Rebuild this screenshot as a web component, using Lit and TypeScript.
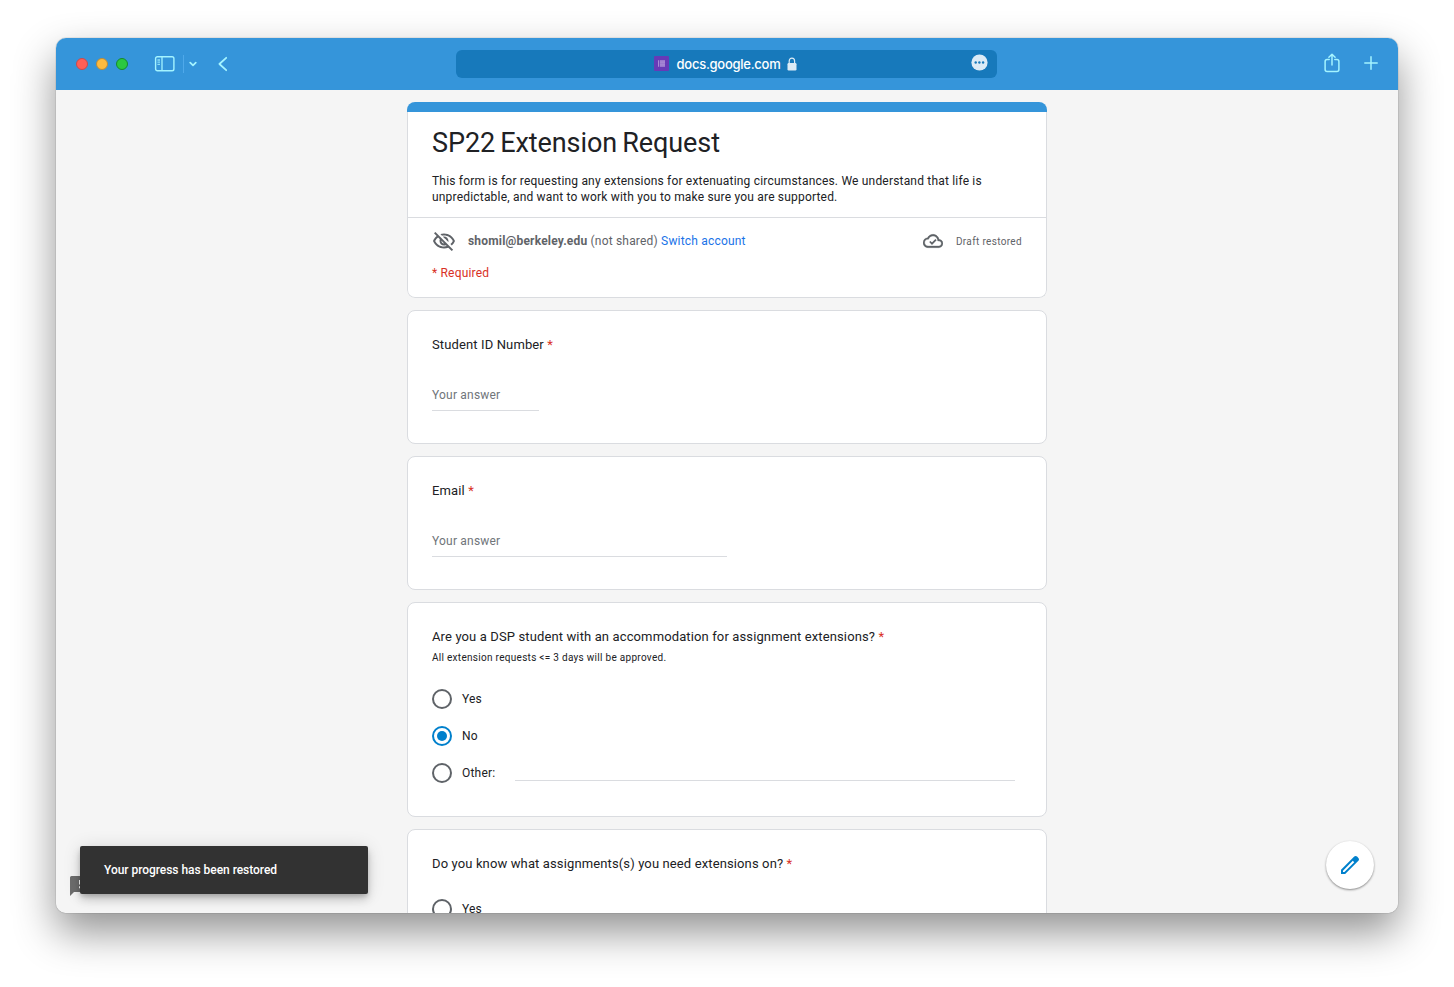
import { LitElement, html, css, nothing } from "lit";
import { customElement } from "lit/decorators.js";
import { classMap } from "lit/directives/class-map.js";

@customElement("browser-toolbar")
export class BrowserToolbar extends LitElement {
  static styles = css`
    :host {
      display: grid;
      grid-template-columns: 400px 541px 1fr;
      align-items: center;
      height: 52px;
      background: #3595da;
      font-family: Inter, Roboto, sans-serif;
    }
    svg { display: block; }
    .left { display: flex; align-items: center; padding-left: 20px; }
    .lights { display: flex; gap: 8px; margin-right: 26px; }
    .light { width: 12px; height: 12px; border-radius: 50%; box-sizing: border-box; border: 1px solid; }
    .red { background: #ff5f57; border-color: #c94a4c; }
    .yellow { background: #fdbb3f; border-color: #b98a3a; }
    .green { background: #2bc840; border-color: #16892d; }
    .sep { width: 1px; height: 18px; background: #4fa9ea; margin: 0 5px 0 8px; }
    .chev { margin-right: 20px; }
    .address {
      position: relative;
      display: flex;
      align-items: center;
      justify-content: center;
      box-sizing: border-box;
      height: 28px;
      padding-right: 2px;
      border-radius: 6px;
      background: #1779bb;
      color: #fff;
      font-size: 13px;
      font-weight: 500;
      letter-spacing: -0.27px;
    }
    .fav { margin: -1px 8px 0 0; }
    .lock { margin: -1px 0 0 7px; }
    .more { position: absolute; right: 9px; top: 4px; }
    .right { display: flex; justify-content: flex-end; align-items: center; gap: 24px; padding: 0 20px 2px 0; }
  `;
  render() {
    return html`
      <div class="left">
        <div class="lights">
          <div class="light red"></div><div class="light yellow"></div><div class="light green"></div>
        </div>
        <svg width="21" height="16" viewBox="0 0 21 16" fill="none" stroke="#a4f4ff">
          <rect x="1.6" y="0.7" width="18.3" height="14" rx="1.8" stroke-width="1.4" />
          <path d="M8 1v13.6" stroke-width="1.3" />
          <path d="M3.4 4H6M3.4 6.2H6M3.4 8.4H6" stroke-width="1.3" opacity=".8" />
        </svg>
        <div class="sep"></div>
        <svg class="chev" width="8" height="6" viewBox="0 0 8 6" fill="none" stroke="#a4f4ff" stroke-width="1.7" stroke-linecap="round" stroke-linejoin="round">
          <path d="M1.2 1.6 4 4.4l2.8-2.8" />
        </svg>
        <svg width="12" height="16" viewBox="0 0 12 16" fill="none" stroke="#a4f4ff" stroke-width="1.8" stroke-linecap="round" stroke-linejoin="round">
          <path d="M9.2 1.8 2.4 8l6.8 6.2" />
        </svg>
      </div>
      <div class="address">
        <svg class="fav" width="15" height="15" viewBox="0 0 15 15">
          <rect width="15" height="15" rx="1" fill="#673ab7" />
          <path d="M4 4.2h1.2v6.6H4zM6 4.2h5v6.6H6z" fill="#a98bd6" />
          <path d="M6 5.9h5M6 7.5h5M6 9.1h5" stroke="#8f68cb" stroke-width=".5" />
        </svg>
        <span>docs.google.com</span>
        <svg class="lock" width="10" height="14" viewBox="0 0 10 14">
          <path d="M2.2 7V4a2.7 2.9 0 0 1 5.4 0v3" fill="none" stroke="#dcebf6" stroke-width="1.2" />
          <rect x=".5" y="6.1" width="9" height="7.4" rx="1.2" fill="#dcebf6" />
        </svg>
        <svg class="more" width="17" height="17" viewBox="0 0 17 17">
          <circle cx="8.5" cy="8.5" r="8.1" fill="#dcebf6" />
          <circle cx="4.7" cy="8.5" r="1.2" fill="#1779bb" /><circle cx="8.4" cy="8.5" r="1.2" fill="#1779bb" /><circle cx="12.1" cy="8.5" r="1.2" fill="#1779bb" />
        </svg>
      </div>
      <div class="right">
        <svg width="16" height="20" viewBox="0 0 16 20" fill="none" stroke="#a4f4ff" stroke-width="1.5" stroke-linecap="round" stroke-linejoin="round">
          <path d="M5.2 6.5H3.1a2 2 0 0 0-2 2v7.9a2 2 0 0 0 2 2h9.8a2 2 0 0 0 2-2V8.5a2 2 0 0 0-2-2h-2.1M8 12V1.2M4.9 4.2 8 1.2l3.1 3" />
        </svg>
        <svg width="14" height="14" viewBox="0 0 14 14" fill="none" stroke="#a4f4ff" stroke-width="1.5" stroke-linecap="round">
          <path d="M7 .8v12.4M.8 7h12.4" />
        </svg>
      </div>
    `;
  }
}

interface Choice { label: string; selected?: boolean; free?: boolean; }

@customElement("question-card")
export class QuestionCard extends LitElement {
  static properties = { heading: {}, hint: {}, field: {}, choices: { attribute: false } };
  declare heading: string;
  declare hint?: string;
  declare field?: string;
  declare choices?: Choice[];

  static styles = css`
    :host {
      display: block;
      box-sizing: border-box;
      padding: 24px 31px 32px 24px;
      border: 1px solid #dadce0;
      border-radius: 8px;
      background: #fff;
      color: #202124;
      font: 400 12px/16px Roboto, sans-serif;
      letter-spacing: 0.2px;
    }
    .heading { height: 20px; font-size: 13px; line-height: 20px; letter-spacing: 0.125px; }
    .star { color: #d93025; }
    .hint { font-size: 10px; line-height: 14px; letter-spacing: 0.29px; margin-top: 4px; }
    .field { box-sizing: border-box; height: 24px; margin-top: 32px; border-bottom: 1px solid #dadce0; color: #70757a; }
    .short { width: 107px; }
    .medium { width: 295px; }
    .choices { display: flex; flex-direction: column; gap: 17px; margin-top: 25px; }
    .with-hint { margin-top: 24px; }
    .choice { display: flex; align-items: center; height: 20px; }
    .radio {
      display: grid; place-items: center;
      box-sizing: border-box; width: 20px; height: 20px; margin-right: 10px;
      border: 2px solid #5f6368; border-radius: 50%;
    }
    .on { border-color: #0080cc; }
    .on::after { content: ""; width: 10px; height: 10px; border-radius: 50%; background: #0080cc; }
    .free { flex: 1; align-self: stretch; box-sizing: border-box; height: 18px; margin-left: 20px; border-bottom: 1px solid #dadce0; }
  `;
  render() {
    return html`
      <div class="heading">${this.heading} <span class="star">*</span></div>
      ${this.hint ? html`<div class="hint">${this.hint}</div>` : nothing}
      ${this.field ? html`<div class="field ${this.field}">Your answer</div>` : nothing}
      ${this.choices
        ? html`<div class=${classMap({ choices: true, "with-hint": !!this.hint })}>
            ${this.choices.map((c) => html`
              <div class="choice">
                <div class=${classMap({ radio: true, on: !!c.selected })}></div>
                <span>${c.label}</span>
                ${c.free ? html`<div class="free"></div>` : nothing}
              </div>`)}
          </div>`
        : nothing}
    `;
  }
}

@customElement("app-root")
export class AppRoot extends LitElement {
  static styles = css`
    :host {
      display: block;
      box-sizing: border-box;
      height: 987px;
      padding: 38px 56px 74px;
      overflow: hidden;
      background: #fff;
      font: 400 12px/16px Roboto, sans-serif;
      letter-spacing: 0.19px;
      color: #202124;
    }
    svg { display: block; }
    .window {
      position: relative;
      height: 875px;
      border-radius: 10px;
      box-shadow: 0 0 1px rgba(0, 0, 0, 0.65), 0 19px 42px rgba(0, 0, 0, 0.43);
    }
    .clip { height: 100%; border-radius: 10px; overflow: hidden; background: #f5f5f5; }
    .form { display: flex; flex-direction: column; gap: 12px; width: 640px; margin: 12px auto 0; }
    .intro { height: 196px; display: flex; flex-direction: column; overflow: hidden; border-radius: 8px; }
    .band { height: 10px; background: #3595da; }
    .sheet { flex: 1; border: 1px solid #dadce0; border-top: 0; border-radius: 0 0 8px 8px; background: #fff; }
    .about { padding: 13px 24px 12px; border-bottom: 1px solid #dadce0; }
    .title { font-size: 27px; line-height: 36px; letter-spacing: -0.08px; word-spacing: -1.5px; }
    .desc { margin: 12px 0 0; width: 580px; }
    .account { display: flex; align-items: center; height: 24px; padding: 11px 24px 0; color: #5f6368; }
    .who { margin-left: 12px; }
    .who b { font-weight: 700; }
    .link { color: #1a73e8; }
    .draft { margin-left: auto; display: flex; align-items: center; gap: 13px; font-size: 10px; letter-spacing: 0.34px; }
    .draft span { padding-top: 2px; }
    .required { padding: 12px 24px 0; color: #d93025; }
    .tall { min-height: 215px; }
    .report { position: absolute; left: 14px; top: 838px; }
    .toast {
      position: absolute; left: 24px; top: 808px; width: 288px; height: 48px;
      box-sizing: border-box; padding: 16px 24px; border-radius: 2px;
      background: #323232; color: #fff; font-weight: 500; letter-spacing: -0.04px;
      box-shadow: 0 6px 10px rgba(0, 0, 0, 0.14), 0 1px 18px rgba(0, 0, 0, 0.12), 0 3px 5px -1px rgba(0, 0, 0, 0.2);
    }
    .fab {
      position: absolute; right: 24px; top: 803px; width: 48px; height: 48px;
      display: grid; place-items: center; border-radius: 50%; background: #fff;
      box-shadow: 0 1px 2px rgba(0, 0, 0, 0.35), 0 1px 3px rgba(0, 0, 0, 0.12);
    }
  `;
  render() {
    return html`
      <div class="window">
        <div class="clip">
          <browser-toolbar></browser-toolbar>
          <div class="form">
            <div class="intro">
              <div class="band"></div>
              <div class="sheet">
                <div class="about">
                  <div class="title">SP22 Extension Request</div>
                  <p class="desc">This form is for requesting any extensions for extenuating circumstances. We understand that life is unpredictable, and want to work with you to make sure you are supported.</p>
                </div>
                <div class="account">
                  <svg width="24" height="24" viewBox="0 -.5 24 24" fill="#5f6368">
                    <path d="M12 6c3.79 0 7.17 2.13 8.82 5.5-.59 1.22-1.42 2.27-2.41 3.12l1.41 1.41c1.39-1.23 2.49-2.77 3.18-4.53C21.27 7.11 17 4 12 4c-1.27 0-2.49.2-3.64.57l1.65 1.65C10.66 6.09 11.32 6 12 6zm-1.07 1.14L13 9.21c.57.25 1.03.71 1.28 1.28l2.07 2.07c.08-.34.14-.7.14-1.07C16.5 9.01 14.48 7 12 7c-.37 0-.72.05-1.07.14zM2.01 3.87l2.68 2.68C3.06 7.83 1.77 9.53 1 11.5 2.73 15.89 7 19 12 19c1.52 0 2.98-.29 4.32-.82l3.42 3.42 1.41-1.41L3.42 2.45 2.01 3.87zm7.5 7.5l2.61 2.61c-.04.01-.08.02-.12.02-1.38 0-2.5-1.12-2.5-2.5 0-.05.01-.08.01-.13zm-3.4-3.4l1.75 1.75c-.23.55-.36 1.15-.36 1.78 0 2.48 2.02 4.5 4.5 4.5.63 0 1.23-.13 1.77-.36l.98.98c-.88.24-1.8.38-2.75.38-3.79 0-7.17-2.13-8.82-5.5.7-1.43 1.72-2.61 2.93-3.53z" />
                  </svg>
                  <span class="who"><b>shomil@berkeley.edu</b> (not shared) <span class="link">Switch account</span></span>
                  <span class="draft">
                    <svg width="20" height="20" viewBox="0 0 24 24" fill="#5f6368">
                      <path stroke="#5f6368" stroke-width=".4" d="M19.35 10.04C18.67 6.59 15.64 4 12 4 9.11 4 6.6 5.64 5.35 8.04 2.34 8.36 0 10.91 0 14c0 3.31 2.69 6 6 6h13c2.76 0 5-2.24 5-5 0-2.64-2.05-4.78-4.65-4.96zM19 18H6c-2.21 0-4-1.79-4-4 0-2.05 1.53-3.76 3.56-3.97l1.07-.11.5-.95C8.08 7.14 9.94 6 12 6c2.62 0 4.88 1.86 5.39 4.43l.3 1.5 1.53.11c1.56.1 2.78 1.41 2.78 2.96 0 1.65-1.35 3-3 3z" />
                      <path d="M8.2 12.6l2.6 2.6 4.8-4.8" fill="none" stroke="#5f6368" stroke-width="2.1" />
                    </svg>
                    <span>Draft restored</span>
                  </span>
                </div>
                <div class="required">* Required</div>
              </div>
            </div>
            <question-card heading="Student ID Number" field="short"></question-card>
            <question-card heading="Email" field="medium"></question-card>
            <question-card class="tall"
              heading="Are you a DSP student with an accommodation for assignment extensions?"
              hint="All extension requests <= 3 days will be approved."
              .choices=${[{ label: "Yes" }, { label: "No", selected: true }, { label: "Other:", free: true }]}></question-card>
            <question-card
              heading="Do you know what assignments(s) you need extensions on?"
              .choices=${[{ label: "Yes" }]}></question-card>
          </div>
        </div>
        <svg class="report" width="24" height="20" viewBox="0 0 24 20">
          <path d="M1.5 0H24v16H4L0 20V1.5A1.5 1.5 0 0 1 1.5 0z" fill="#6d6d6d" />
          <path d="M9 4h2v4.5H9zM9 10.2h2v2H9z" fill="#fff" />
        </svg>
        <div class="toast">Your progress has been restored</div>
        <div class="fab">
          <svg width="24" height="24" viewBox="0 0 24 24" fill="#0080cc">
            <path d="M20.41 4.94l-1.35-1.35c-.78-.78-2.05-.78-2.83 0L3 16.82V21h4.18L20.41 7.77c.79-.78.79-2.05 0-2.83zm-14 14.12L5 19v-1.36l9.82-9.82 1.41 1.41-9.82 9.83z" />
          </svg>
        </div>
      </div>
    `;
  }
}
